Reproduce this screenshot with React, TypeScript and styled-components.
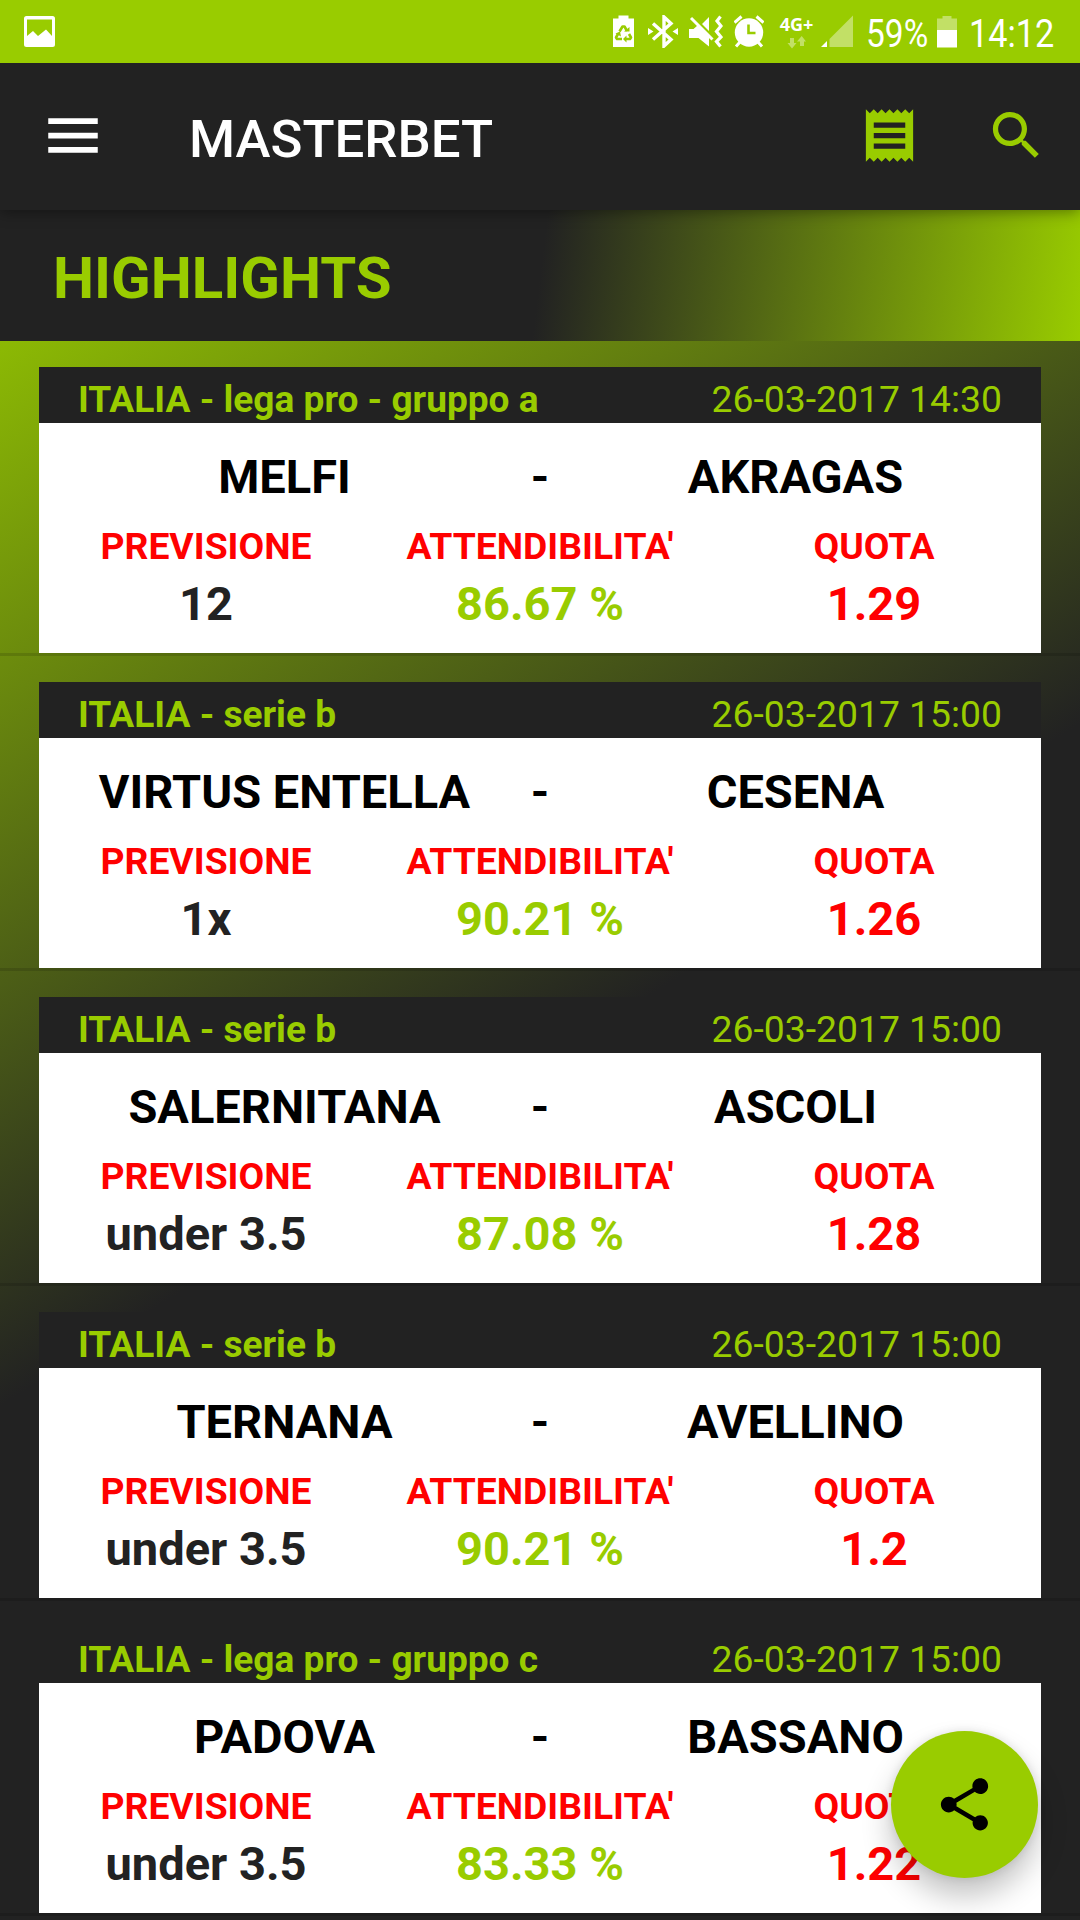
import React from "react";
import styled, { createGlobalStyle } from "styled-components";

const GREEN = "#99cc00";
const DARK = "#222222";

const GlobalStyle = createGlobalStyle`
  * { box-sizing: border-box; }
  body { margin: 0; background: ${DARK}; font-family: Roboto, sans-serif; }
`;

const Screen = styled.div`
  position: relative;
  display: flex;
  flex-direction: column;
  width: 1080px;
  height: 1920px;
  overflow: hidden;
`;

const StatusBar = styled.header`
  position: relative;
  z-index: 2;
  display: flex;
  flex: none;
  justify-content: space-between;
  height: 63px;
  padding: 15px 27px 0 24px;
  background: ${GREEN};
  color: #fff;
`;

const StatusGroup = styled.div`
  display: flex;
  align-items: flex-start;
`;

const StatusItem = styled.div<{ $width: number; $gap?: number }>`
  flex: none;
  width: ${(p) => p.$width}px;
  height: 33px;
  margin-left: ${(p) => p.$gap ?? 0}px;
  svg { display: block; }
`;

const StatusText = styled.span<{ $stretch: number }>`
  display: block;
  font-size: 38.5px;
  line-height: 37px;
  white-space: nowrap;
  transform: scaleX(${(p) => p.$stretch});
  transform-origin: 0 50%;
`;

const Network = styled.div`
  display: flex;
  flex-direction: column;
  align-items: center;
  font: 700 18px/19px "Open Sans", sans-serif;
  white-space: nowrap;
  svg { margin-top: 2px; }
`;

const Toolbar = styled.nav`
  position: relative;
  z-index: 1;
  display: flex;
  flex: none;
  align-items: flex-start;
  height: 147px;
  padding: 0 32px 0 40px;
  background: ${DARK};
  box-shadow: 0 2px 14px rgba(0, 0, 0, 0.4);
`;

const MenuButton = styled.button`
  width: 66px;
  height: 69px;
  margin: 38px 0 0;
  padding: 0;
  border: 0;
  background: none;
  color: #fff;
`;

const Title = styled.h1`
  flex: 1;
  margin: 0 0 0 83px;
  font-size: 52.7px;
  font-weight: 500;
  line-height: 152px;
  color: #fff;
`;

const Actions = styled.div`
  display: flex;
  gap: 64px;
  padding-top: 41px;
`;

const IconButton = styled.button`
  width: 63px;
  height: 63px;
  padding: 0;
  border: 0;
  background: none;
  color: ${GREEN};
  svg { display: block; }
`;

const Content = styled.main`
  flex: none;
  height: 1710px;
  background: linear-gradient(147.72deg, ${GREEN} 0%, ${DARK} 50%);
`;

const SectionTitle = styled.h2`
  height: 131px;
  margin: 0;
  padding: 3px 0 0 53px;
  font-size: 58.2px;
  font-weight: 700;
  line-height: 131px;
  color: ${GREEN};
  background: linear-gradient(96.92deg, ${DARK} 50%, ${GREEN} 100%);
`;

const MatchItem = styled.article`
  height: 315px;
  padding: 26px 39px 0;
  border-bottom: 3px solid rgba(0, 0, 0, 0.13);
`;

const MatchHeader = styled.div`
  display: flex;
  justify-content: space-between;
  height: 56px;
  padding: 11px 39px 0;
  line-height: 44px;
  color: ${GREEN};
  background: ${DARK};
`;

const League = styled.strong`
  font-size: 37.1px;
  font-weight: 700;
`;

const Kickoff = styled.time`
  font-size: 37.3px;
  line-height: 42px;
`;

const MatchBody = styled.div`
  height: 230px;
  padding-top: 16px;
  background: #fff;
  text-align: center;
`;

const Teams = styled.div`
  display: grid;
  grid-template-columns: 1fr 98px 1fr;
  padding: 0 39px;
  font-size: 47px;
  font-weight: 700;
  line-height: 76px;
  color: #000;
`;

const Stats = styled.div`
  display: grid;
  grid-template-columns: repeat(3, 1fr);
`;

const StatLabel = styled.div`
  font-size: 37.3px;
  font-weight: 700;
  line-height: 62px;
  color: #ff0000;
`;

const StatValue = styled.div<{ $color: string }>`
  font-size: 47px;
  font-weight: 700;
  line-height: 53px;
  color: ${(p) => p.$color};
`;

const ShareButton = styled.button`
  position: absolute;
  left: 891px;
  top: 1731px;
  display: flex;
  align-items: center;
  justify-content: center;
  width: 147px;
  height: 147px;
  padding: 0;
  border: 0;
  border-radius: 50%;
  background: ${GREEN};
  color: #000;
  box-shadow: 0 18px 30px rgba(0, 0, 0, 0.24), 0 0 10px rgba(0, 0, 0, 0.1);
`;

const matches = [
  { league: "ITALIA - lega pro - gruppo a", date: "26-03-2017 14:30", home: "MELFI", away: "AKRAGAS", tip: "12", rate: "86.67 %", odds: "1.29" },
  { league: "ITALIA - serie b", date: "26-03-2017 15:00", home: "VIRTUS ENTELLA", away: "CESENA", tip: "1x", rate: "90.21 %", odds: "1.26" },
  { league: "ITALIA - serie b", date: "26-03-2017 15:00", home: "SALERNITANA", away: "ASCOLI", tip: "under 3.5", rate: "87.08 %", odds: "1.28" },
  { league: "ITALIA - serie b", date: "26-03-2017 15:00", home: "TERNANA", away: "AVELLINO", tip: "under 3.5", rate: "90.21 %", odds: "1.2" },
  { league: "ITALIA - lega pro - gruppo c", date: "26-03-2017 15:00", home: "PADOVA", away: "BASSANO", tip: "under 3.5", rate: "83.33 %", odds: "1.22" },
];

const PictureIcon = () => (
  <svg width="31" height="33" viewBox="0 0 31 33" fill="#fff">
    <path fillRule="evenodd" d="M2.500 1h26A2.500 2.500 0 0 1 31 3.500v26a2.500 2.500 0 0 1-2.500 2.500h-26A2.500 2.500 0 0 1 0 29.500v-26A2.500 2.500 0 0 1 2.500 1zM3 4.500V21l6-5 5 5 8-6.500 6 6.500V4.500z" />
  </svg>
);

const BatterySaverIcon = () => (
  <svg width="21" height="33" viewBox="0 0 21 33">
    <path fill="#fff" d="M5.500 0.500h10V3.500H21V32H0V3.500h5.500z" />
    <path fill="none" stroke={GREEN} strokeWidth="2.600" strokeLinejoin="round" d="M6.500 16.500l3-5h2l2.500 4.500M16 19l2 3.500-1 1.500h-4M9 24H4l-1-1.500 2-3.500" />
    <path fill={GREEN} d="M11 16.500h5.500V12zM13.500 20.500v7L10 24zM2.500 18.500l4.500-2 1 5z" />
  </svg>
);

const BluetoothIcon = () => (
  <svg width="30" height="33" viewBox="0 0 30 33">
    <path fill="none" stroke="#fff" strokeWidth="3.400" d="M5 8.500l18 16-7 6.500V2l7 6.500-18 16" />
    <path fill="#fff" d="M0 13l5.500 3.500L0 20zM30 13l-5.500 3.500L30 20z" />
  </svg>
);

const MuteVibrateIcon = () => (
  <svg width="34" height="33" viewBox="0 0 34 33">
    <path fill="#fff" d="M0 14h4.500l4-3.500L20 22v9.500L9.500 23H0zM20 2v14l-7-7z" />
    <path fill="none" stroke="#fff" strokeWidth="3" d="M2 3l21.500 21.500" />
    <path fill="none" stroke="#fff" strokeWidth="3.200" d="M31.500 1.500l-3.500 4.500 4 5-4.500 5.500 4.500 5.500-4.500 4.500 4 5" />
  </svg>
);

const AlarmIcon = () => (
  <svg width="30" height="33" viewBox="0 0 30 33">
    <circle cx="15" cy="17.500" r="14.200" fill="#fff" />
    <path fill="none" stroke="#fff" strokeWidth="3" d="M0.500 7.500L7.500 1.500M29.500 7.500L22.500 1.500M6 27l-4 4.500M24 27l4 4.500" />
    <path fill="none" stroke={GREEN} strokeWidth="2.600" d="M14.500 9.500v8.500h7" />
  </svg>
);

const DataArrowsIcon = () => (
  <svg width="19" height="13" viewBox="0 0 19 13" fill="#fff" opacity="0.4">
    <path d="M3 2h4v5h2.500L5 12.500 0.500 7H3zM13 10h4V5.500h2L14.700 0 10 5.500h3z" />
  </svg>
);

const SignalIcon = () => (
  <svg width="32" height="33" viewBox="0 0 32 33" fill="#fff">
    <path d="M0 32l6-6v6z" />
    <path opacity="0.4" d="M8.500 32V24L32 0.500V32z" />
  </svg>
);

const BatteryIcon = () => (
  <svg width="20" height="33" viewBox="0 0 20 33" fill="#fff">
    <path opacity="0.4" d="M5.500 1h9v2.500H20V15H0V3.500h5.500z" />
    <path d="M0 15h20v17.500H0z" />
  </svg>
);

const MenuIcon = () => (
  <svg width="66" height="69" viewBox="0 0 24 24" preserveAspectRatio="none" fill="currentColor">
    <path d="M3 18h18v-2H3v2zm0-5h18v-2H3v2zm0-7v2h18V6H3z" />
  </svg>
);

const ReceiptIcon = () => (
  <svg width="63" height="63" viewBox="0 0 24 24" fill="currentColor">
    <path d="M18 17H6v-2h12v2zm0-4H6v-2h12v2zm0-4H6V7h12v2zM3 22l1.500-1.500L6 22l1.500-1.500L9 22l1.500-1.500L12 22l1.500-1.500L15 22l1.500-1.500L18 22l1.500-1.500L21 22V2l-1.500 1.500L18 2l-1.500 1.500L15 2l-1.500 1.500L12 2l-1.500 1.500L9 2 7.500 3.500 6 2 4.500 3.500 3 2v20z" />
  </svg>
);

const SearchIcon = () => (
  <svg width="63" height="63" viewBox="0 0 24 24" fill="currentColor">
    <path d="M15.500 14h-.79l-.28-.27C15.410 12.590 16 11.110 16 9.500 16 5.910 13.090 3 9.500 3S3 5.910 3 9.500 5.910 16 9.500 16c1.610 0 3.090-.59 4.230-1.570l.27.28v.79l5 4.990L20.490 19l-4.990-5zm-6 0C7.010 14 5 11.990 5 9.500S7.010 5 9.500 5 14 7.010 14 9.500 11.990 14 9.500 14z" />
  </svg>
);

const ShareIcon = () => (
  <svg width="63" height="63" viewBox="0 0 24 24" fill="currentColor">
    <path d="M18 16.080c-.76 0-1.440.3-1.960.77L8.910 12.700c.05-.23.090-.46.090-.7s-.04-.47-.09-.7l7.050-4.110c.54.5 1.250.81 2.040.81 1.660 0 3-1.340 3-3s-1.340-3-3-3-3 1.340-3 3c0 .24.040.47.090.7L8.040 9.810C7.500 9.310 6.790 9 6 9c-1.660 0-3 1.340-3 3s1.340 3 3 3c.79 0 1.500-.31 2.040-.81l7.120 4.160c-.05.21-.08.430-.08.650 0 1.610 1.310 2.920 2.920 2.920 1.610 0 2.920-1.310 2.920-2.920s-1.310-2.920-2.920-2.920z" />
  </svg>
);

export default function App() {
  return (
    <Screen>
      <GlobalStyle />
      <StatusBar>
        <StatusItem $width={31}><PictureIcon /></StatusItem>
        <StatusGroup>
          <StatusItem $width={21}><BatterySaverIcon /></StatusItem>
          <StatusItem $width={30} $gap={14}><BluetoothIcon /></StatusItem>
          <StatusItem $width={34} $gap={11}><MuteVibrateIcon /></StatusItem>
          <StatusItem $width={30} $gap={11}><AlarmIcon /></StatusItem>
          <StatusItem $width={33} $gap={16}>
            <Network>4G+<DataArrowsIcon /></Network>
          </StatusItem>
          <StatusItem $width={32} $gap={8}><SignalIcon /></StatusItem>
          <StatusItem $width={62} $gap={13}><StatusText $stretch={0.87}>59%</StatusText></StatusItem>
          <StatusItem $width={20} $gap={9}><BatteryIcon /></StatusItem>
          <StatusItem $width={84} $gap={12}><StatusText $stretch={0.89}>14:12</StatusText></StatusItem>
        </StatusGroup>
      </StatusBar>
      <Toolbar>
        <MenuButton aria-label="Menu"><MenuIcon /></MenuButton>
        <Title>MASTERBET</Title>
        <Actions>
          <IconButton aria-label="Receipt"><ReceiptIcon /></IconButton>
          <IconButton aria-label="Search"><SearchIcon /></IconButton>
        </Actions>
      </Toolbar>
      <Content>
        <SectionTitle>HIGHLIGHTS</SectionTitle>
        {matches.map((m) => (
          <MatchItem key={m.home}>
            <MatchHeader>
              <League>{m.league}</League>
              <Kickoff>{m.date}</Kickoff>
            </MatchHeader>
            <MatchBody>
              <Teams>
                <span>{m.home}</span>
                <span>-</span>
                <span>{m.away}</span>
              </Teams>
              <Stats>
                <StatLabel>PREVISIONE</StatLabel>
                <StatLabel>ATTENDIBILITA'</StatLabel>
                <StatLabel>QUOTA</StatLabel>
                <StatValue $color={DARK}>{m.tip}</StatValue>
                <StatValue $color={GREEN}>{m.rate}</StatValue>
                <StatValue $color="#ff0000">{m.odds}</StatValue>
              </Stats>
            </MatchBody>
          </MatchItem>
        ))}
      </Content>
      <ShareButton aria-label="Share"><ShareIcon /></ShareButton>
    </Screen>
  );
}
